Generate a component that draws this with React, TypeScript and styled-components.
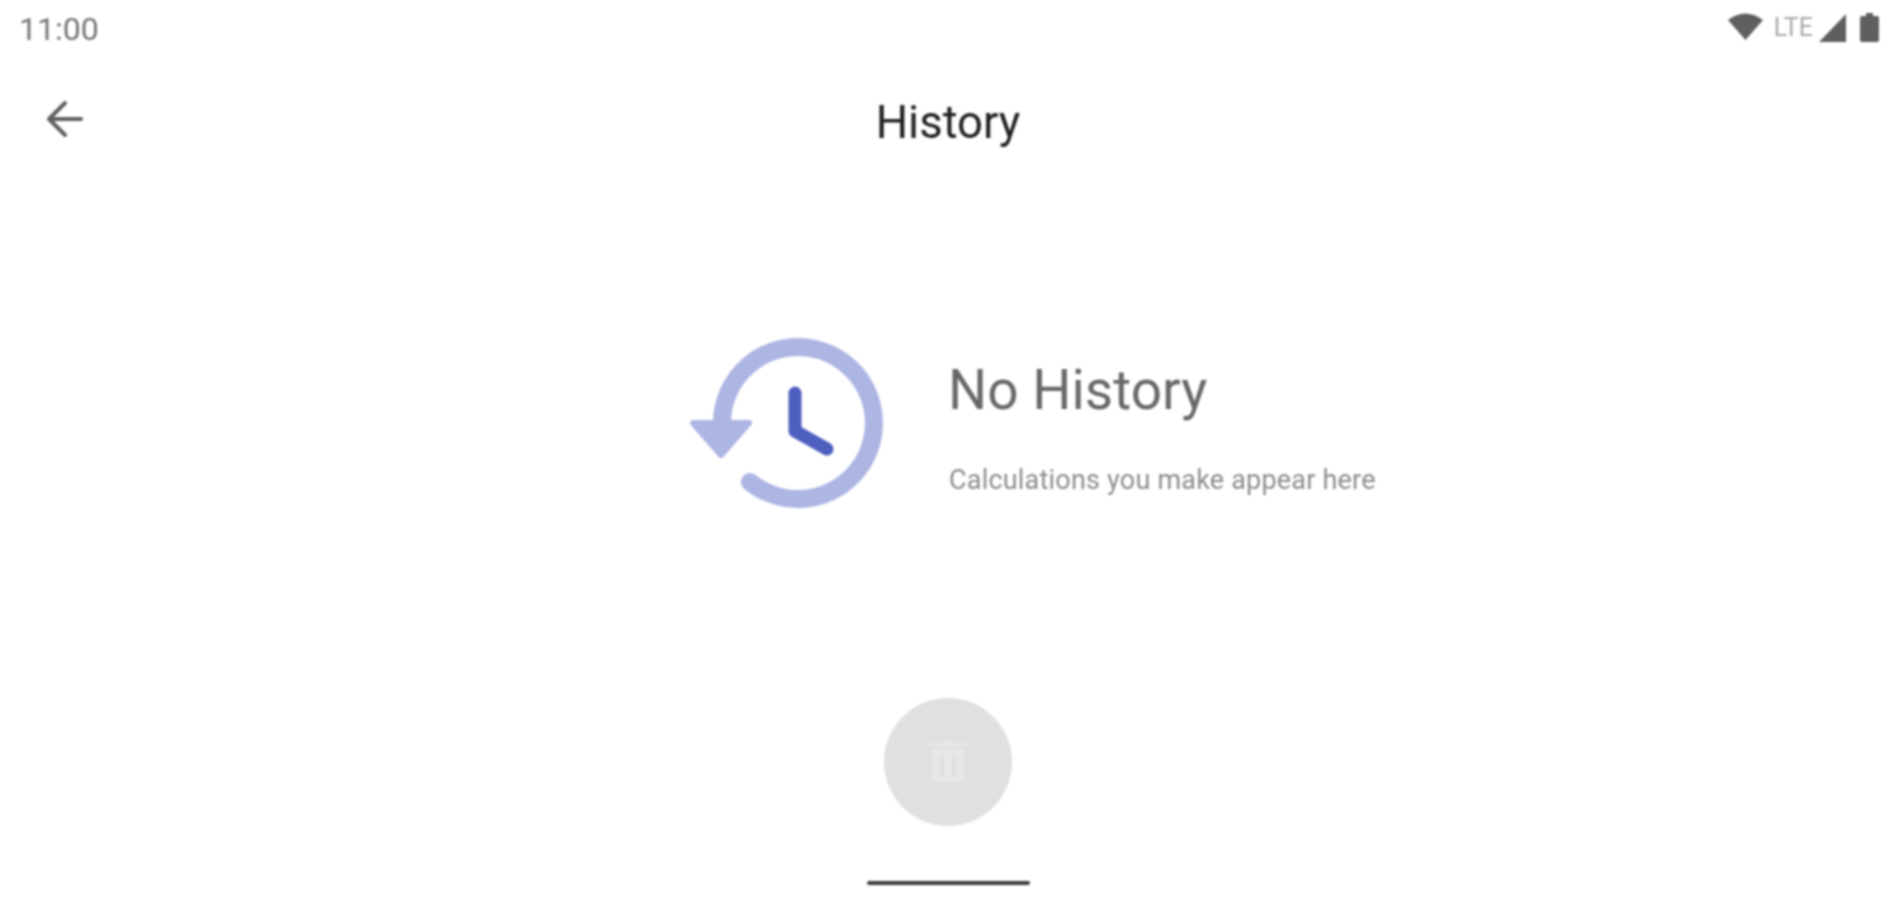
import styled, { createGlobalStyle } from "styled-components";

const GlobalStyle = createGlobalStyle`
  html, body {
    margin: 0;
    padding: 0;
    background: #fff;
  }
  body {
    font-family: Roboto, "Liberation Sans", sans-serif;
  }
`;

const Screen = styled.div`
  width: 1896px;
  height: 900px;
  display: flex;
  flex-direction: column;
  overflow: hidden;
  background: #fff;
  filter: blur(1px);
`;

const StatusBar = styled.div`
  height: 58px;
  flex: none;
  display: flex;
  align-items: center;
  justify-content: space-between;
  padding: 0 17px 0 19px;
`;

const Clock = styled.span`
  font-size: 32px;
  color: #757575;
`;

const StatusIcons = styled.div`
  display: flex;
  align-items: center;
  margin-top: -3px;
`;

const WifiIcon = styled.svg`
  margin-top: -4px;
`;

const Lte = styled.span`
  font-size: 25px;
  line-height: 28px;
  letter-spacing: 0;
  color: #a8a8a8;
  margin: 0 6px 0 11px;
`;

const SignalIcon = styled.svg`
  margin-right: 14px;
`;

const Toolbar = styled.header`
  height: 124px;
  flex: none;
  display: flex;
  align-items: center;
  justify-content: center;
  position: relative;
`;

const BackButton = styled.button`
  position: absolute;
  left: 44px;
  top: 40px;
  width: 42px;
  height: 42px;
  padding: 0;
  border: 0;
  background: none;
`;

const Title = styled.h1`
  margin: 4px 0 0;
  font-size: 45.5px;
  font-weight: 400;
  color: #212121;
`;

const EmptyState = styled.main`
  height: 480px;
  flex: none;
  display: flex;
  align-items: center;
  padding-left: 688px;
`;

const EmptyIcon = styled.svg`
  flex: none;
  margin: 2px 60px 0 0;
`;

const EmptyText = styled.div`
  display: flex;
  flex-direction: column;
  gap: 42px;
  margin-top: 9px;
`;

const EmptyTitle = styled.h2`
  margin: 0;
  font-size: 55px;
  line-height: 64px;
  font-weight: 400;
  color: #686868;
`;

const EmptySubtitle = styled.p`
  margin: 0 0 0 1px;
  font-size: 27px;
  line-height: 32px;
  letter-spacing: 0.2px;
  color: #8c8c8c;
`;

const Footer = styled.footer`
  display: flex;
  flex-direction: column;
  align-items: center;
  padding-top: 36px;
`;

const ClearButton = styled.button`
  width: 128px;
  height: 128px;
  padding: 0;
  border: 0;
  border-radius: 50%;
  background: #e0e0e0;
  display: flex;
  align-items: center;
  justify-content: center;
`;

const HomeBar = styled.div`
  width: 163px;
  height: 4px;
  margin-top: 55px;
  border-radius: 2px;
  background: #3c3c3c;
`;

export default function App() {
  return (
    <>
      <GlobalStyle />
      <Screen>
        <StatusBar>
          <Clock>11:00</Clock>
          <StatusIcons>
            <WifiIcon width="35" height="28" viewBox="0 0 35 28">
              <path d="M0 8 Q17.5 -5 35 8 L17.5 28 Z" fill="#5f5f5f" />
            </WifiIcon>
            <Lte>LTE</Lte>
            <SignalIcon width="27" height="28" viewBox="0 0 27 28">
              <path d="M27 0 V28 H0 Z" fill="#5f5f5f" />
            </SignalIcon>
            <svg width="19" height="29" viewBox="0 0 19 29">
              <path
                d="M6 0 H13 V3 H17 Q19 3 19 5 V27 Q19 29 17 29 H2 Q0 29 0 27 V5 Q0 3 2 3 H6 Z"
                fill="#5f5f5f"
              />
            </svg>
          </StatusIcons>
        </StatusBar>

        <Toolbar>
          <BackButton aria-label="Back">
            <svg width="42" height="42" viewBox="0 0 42 42" fill="none">
              <path
                d="M37 21 H6 M21 5 L5 21 L21 37"
                stroke="#5f5f5f"
                strokeWidth="4"
                strokeLinecap="round"
                strokeLinejoin="round"
              />
            </svg>
          </BackButton>
          <Title>History</Title>
        </Toolbar>

        <EmptyState>
          <EmptyIcon width="200" height="180" viewBox="0 0 200 180" fill="none">
            <path
              d="M34 92 A76 76 0 1 1 62 149"
              stroke="#adb5e3"
              strokeWidth="18"
              strokeLinecap="round"
            />
            <path
              d="M5 90 H61 L33 122 Z"
              fill="#adb5e3"
              stroke="#adb5e3"
              strokeWidth="6"
              strokeLinejoin="round"
            />
            <path
              d="M107 60 V98 L139 116"
              stroke="#4f5fc0"
              strokeWidth="13"
              strokeLinecap="round"
              strokeLinejoin="round"
            />
          </EmptyIcon>
          <EmptyText>
            <EmptyTitle>No History</EmptyTitle>
            <EmptySubtitle>Calculations you make appear here</EmptySubtitle>
          </EmptyText>
        </EmptyState>

        <Footer>
          <ClearButton aria-label="Clear history">
            <svg width="44" height="44" viewBox="0 0 44 44">
              <path
                fillRule="evenodd"
                d="M2 3 H15 L16 1 H28 L29 3 H42 V6 H2 Z M6 9 H38 V41 Q38 42 37 42 H7 Q6 42 6 41 Z M14 14 V37 H18 V14 Z M26 14 V37 H30 V14 Z"
                fill="#e7e7e7"
              />
            </svg>
          </ClearButton>
          <HomeBar />
        </Footer>
      </Screen>
    </>
  );
}
